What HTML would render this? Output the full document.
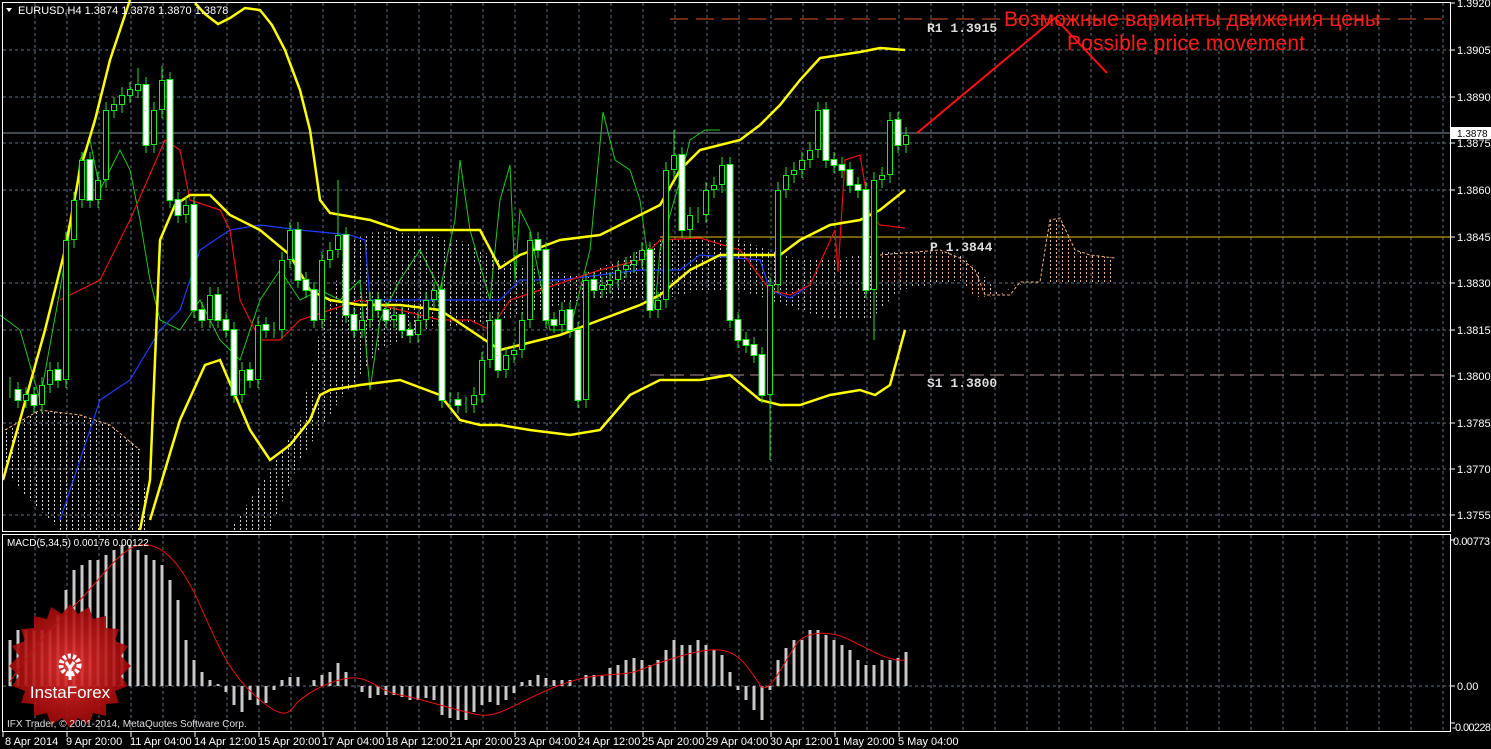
<!DOCTYPE html>
<html><head><meta charset="utf-8"><style>
html,body{margin:0;padding:0;background:#000;width:1491px;height:749px;overflow:hidden}
svg{display:block}
text{font-family:"Liberation Sans",sans-serif}
.ax{fill:#fff;font-size:11px}
.m{font-family:"Liberation Mono",monospace;fill:#ddd;font-size:13px;font-weight:bold}
</style></head><body>
<svg width="1491" height="749" viewBox="0 0 1491 749" xmlns="http://www.w3.org/2000/svg">
<defs>
<pattern id="hatch" width="6" height="4" patternUnits="userSpaceOnUse">
<rect x="0" y="0" width="1" height="2" fill="#ddd"/>
</pattern>
<pattern id="hatchO" width="6" height="4" patternUnits="userSpaceOnUse">
<rect x="0" y="0" width="1" height="2" fill="#f5b27a"/>
</pattern>
<radialGradient id="lg" cx="50%" cy="50%" r="50%">
<stop offset="0" stop-color="#e83030"/><stop offset="1" stop-color="#a00808"/>
</radialGradient>
</defs>
<rect width="1491" height="749" fill="#000"/>
<g stroke="#5f6f84" stroke-width="1" stroke-dasharray="3,3">
<path d="M35 3V531M67 3V531M99 3V531M131 3V531M163 3V531M195 3V531M227 3V531M259 3V531M291 3V531M323 3V531M355 3V531M387 3V531M419 3V531M451 3V531M483 3V531M515 3V531M547 3V531M579 3V531M611 3V531M643 3V531M675 3V531M707 3V531M739 3V531M771 3V531M803 3V531M835 3V531M867 3V531M899 3V531M931 3V531M963 3V531M995 3V531M1027 3V531M1059 3V531M1091 3V531M1123 3V531M1155 3V531M1187 3V531M1219 3V531M1251 3V531M1283 3V531M1315 3V531M1347 3V531M1379 3V531M1411 3V531M1443 3V531"/>
<path d="M35 535V731M67 535V731M99 535V731M131 535V731M163 535V731M195 535V731M227 535V731M259 535V731M291 535V731M323 535V731M355 535V731M387 535V731M419 535V731M451 535V731M483 535V731M515 535V731M547 535V731M579 535V731M611 535V731M643 535V731M675 535V731M707 535V731M739 535V731M771 535V731M803 535V731M835 535V731M867 535V731M899 535V731M931 535V731M963 535V731M995 535V731M1027 535V731M1059 535V731M1091 535V731M1123 535V731M1155 535V731M1187 535V731M1219 535V731M1251 535V731M1283 535V731M1315 535V731M1347 535V731M1379 535V731M1411 535V731M1443 535V731"/>
<path d="M3 50H1450M3 97H1450M3 143H1450M3 190H1450M3 283H1450M3 330H1450M3 423H1450M3 469H1450M3 515H1450M3 686H1450"/>
</g>
<path d="M670 19H1450" stroke="#e0502a" stroke-dasharray="18,8"/>
<path d="M660 237H1450" stroke="#e8c020"/>
<path d="M3 133H1450" stroke="#8090a0"/>
<path d="M650 375H1450" stroke="#b09098" stroke-dasharray="14,6"/>
<polygon fill="url(#hatch)" opacity="0.9" points="230,530 270,470 300,420 320,330 350,240 380,230 420,235 460,240 500,260 540,270 580,275 620,260 660,240 700,240 740,240 770,250 800,260 830,260 860,255 900,250 940,250 960,255 980,272 1000,295 1020,282 1020,282 1000,295 960,280 900,290 870,320 830,320 800,310 770,300 740,290 700,290 660,300 620,300 580,300 540,310 500,320 460,325 420,330 380,350 340,400 320,430 300,460 270,530"/>
<polygon fill="url(#hatchO)" points="880,255 940,250 960,258 975,270 990,290 1000,295 1015,285 1045,282 1050,220 1060,218 1068,235 1075,250 1090,255 1115,258 1115,282 1045,282 1020,282 1000,296 975,297 960,280 900,282 880,282"/>
<polyline fill="none" stroke="#f5b27a" stroke-dasharray="3,2" points="880,255 940,250 960,258 975,270 985,295 1010,295 1020,282 1040,282 1045,250 1050,220 1060,218 1068,235 1075,250 1090,255 1115,258"/>
<polygon fill="url(#hatch)" points="5,430 40,410 80,415 110,425 140,450 150,530 60,530 20,490 5,470"/>
<polyline fill="none" stroke="#f5b27a" stroke-dasharray="3,2" points="5,430 40,410 80,415 110,425 140,450"/>
<polyline fill="none" stroke="#1ec81e" stroke-width="1" points="0,315 20,330 40,400 60,290 70,230 80,160 90,140 100,190 120,150 130,170 140,220 150,280 160,320 180,330 200,300 220,340 240,360 260,300 280,270 300,300 320,290 340,300 360,280 370,390 380,320 400,280 420,250 440,290 455,220 460,160 470,230 490,300 500,200 510,165 515,280 520,210 530,230 550,330 570,330 590,250 603,112 615,160 630,170 640,200 655,310 660,250 680,180 690,140 705,130 720,130"/>
<polyline fill="none" stroke="#1c3cff" stroke-width="1.2" points="60,520 80,460 100,400 130,380 160,330 180,310 200,250 230,230 260,225 300,230 350,235 365,240 370,300 440,300 500,300 520,280 560,280 640,270 680,270 700,255 760,260 770,290 790,298 810,285"/>
<polyline fill="none" stroke="#e81010" stroke-width="1.2" points="60,300 100,280 130,220 165,140 180,150 190,200 220,210 230,230 240,300 260,340 280,340 300,320 330,310 360,300 400,310 440,320 470,320 490,330 510,300 540,290 570,280 600,270 640,260 660,240 700,238 740,250 770,290 790,295 810,285 835,230 838,272 845,160 860,155 870,215 880,225 905,228"/>
<g fill="none" stroke="#ffff00" stroke-width="2.5">
<polyline points="3,480 20,420 45,330 65,250 80,170 95,120 110,60 125,15 130,0"/>
<polyline points="195,3 205,14 218,24 230,18 245,8 260,10 272,25 285,50 300,90 310,130 320,200 330,213 370,220 400,230 440,230 480,230 500,268 520,255 560,240 600,235 640,215 660,205 680,170 700,150 740,140 760,125 780,105 800,80 820,58 860,52 880,48 905,50"/>
<polyline points="140,530 150,480 160,240 175,205 190,195 210,195 230,215 260,230 290,255 310,290 330,300 360,305 400,305 440,310 470,330 500,350 520,345 560,335 600,320 640,305 660,295 690,270 720,255 750,255 780,255 800,240 830,225 860,220 880,210 905,190"/>
<polyline points="150,520 180,420 205,365 220,360 235,395 250,430 270,460 290,445 310,420 320,395 330,390 360,385 400,380 440,395 460,420 480,425 500,425 530,430 570,435 600,430 630,395 660,380 700,380 730,375 760,400 780,405 800,405 830,395 860,390 875,395 890,385 905,330"/>
</g>
<path stroke="#1ee81e" stroke-width="1" fill="none" d="M10 377V398M18 382V408M26 387V408M34 387V413M42 377V413M50 362V393M58 362V388M66 232V388M74 192V248M82 152V208M90 152V208M98 172V208M106 102V188M114 97V118M122 87V113M130 82V103M138 68V98M146 77V153M154 102V153M162 66V118M170 72V208M178 192V223M186 197V223M194 197V318M202 302V328M210 287V328M218 287V328M226 312V338M234 322V403M242 362V403M250 362V388M258 317V388M266 317V338M274 322V338M282 252V338M290 222V268M298 222V288M306 272V298M314 282V328M322 252V328M330 242V268M338 180V258M346 227V323M354 307V338M362 312V338M370 292V328M378 292V318M386 302V328M394 307V328M402 307V338M410 322V343M418 312V343M426 292V328M434 282V308M442 282V408M450 392V408M458 392V413M466 397V413M474 387V413M482 352V403M490 312V368M498 312V378M506 347V378M514 342V363M522 312V358M530 232V328M538 232V258M546 242V328M554 312V333M562 302V333M570 302V338M578 322V408M586 272V408M594 272V298M602 277V298M610 272V293M618 262V288M626 257V278M634 252V273M642 242V268M650 242V318M658 292V318M666 162V308M674 130V178M682 147V238M690 207V238M698 207V223M706 182V223M714 177V198M722 157V193M730 157V328M738 312V348M746 332V353M754 337V363M762 347V403M770 277V460M778 182V293M786 167V198M794 162V183M802 152V178M810 142V168M818 102V158M826 102V168M834 152V173M842 157V178M850 162V193M858 177V198M866 182V298M874 172V340M882 167V188M890 112V183M898 112V153M906 127V153"/>
<path stroke="#1ee81e" stroke-width="6" fill="none" d="M26 401V394M42 405V385M50 385V370M66 380V240M74 240V200M82 200V160M98 200V180M106 180V110M114 111V104M122 105V95M130 96V89M138 91V84M154 145V110M162 110V80M186 215V205M210 320V295M242 395V370M258 380V325M282 330V260M290 260V230M322 320V260M330 260V250M338 250V235M362 330V320M370 320V300M394 320V315M418 335V320M426 320V300M434 300V290M474 405V395M482 395V360M490 360V320M506 370V355M514 355V350M522 350V320M530 320V240M562 325V310M586 400V280M602 290V285M610 285V280M618 280V270M626 270V265M634 265V260M642 260V250M658 310V300M666 300V170M674 170V155M690 230V215M706 215V190M714 190V185M722 185V165M770 395V285M778 285V190M786 190V175M794 175V170M802 170V160M810 160V150M818 150V110M874 290V180M882 180V175M890 175V120M906 145V135"/>
<path stroke="#000" stroke-width="4" fill="none" d="M26 400V395M42 404V386M50 384V371M66 379V241M74 239V201M82 199V161M98 199V181M106 179V111M114 110V105M122 104V96M130 95V90M138 90V85M154 144V111M162 109V81M186 214V206M210 319V296M242 394V371M258 379V326M282 329V261M290 259V231M322 319V261M330 259V251M338 249V236M362 329V321M370 319V301M394 319V316M418 334V321M426 319V301M434 299V291M474 404V396M482 394V361M490 359V321M506 369V356M514 354V351M522 349V321M530 319V241M562 324V311M586 399V281M602 289V286M610 284V281M618 279V271M626 269V266M634 264V261M642 259V251M658 309V301M666 299V171M674 169V156M690 229V216M706 214V191M714 189V186M722 184V166M770 394V286M778 284V191M786 189V176M794 174V171M802 169V161M810 159V151M818 149V111M874 289V181M882 179V176M890 174V121M906 144V136"/>
<path stroke="#1ee81e" stroke-width="7" fill="none" d="M18 389V401M34 394V406M58 369V381M90 159V201M146 84V146M170 79V201M178 199V216M194 204V311M202 309V321M218 294V321M226 319V331M234 329V396M250 369V381M266 324V331M298 229V281M306 279V291M314 289V321M346 234V316M354 314V331M378 299V311M386 309V321M402 314V331M410 329V336M442 289V401M458 399V406M498 319V371M538 239V251M546 249V321M554 319V326M570 309V331M578 329V401M594 279V291M650 249V311M682 154V231M730 164V321M738 319V341M746 339V346M754 344V356M762 354V396M826 109V161M834 159V166M842 164V171M850 169V186M858 184V191M866 189V291M898 119V146"/>
<path stroke="#fff" stroke-width="5" fill="none" d="M18 390V400M34 395V405M58 370V380M90 160V200M146 85V145M170 80V200M178 200V215M194 205V310M202 310V320M218 295V320M226 320V330M234 330V395M250 370V380M266 325V330M298 230V280M306 280V290M314 290V320M346 235V315M354 315V330M378 300V310M386 310V320M402 315V330M410 330V335M442 290V400M458 400V405M498 320V370M538 240V250M546 250V320M554 320V325M570 310V330M578 330V400M594 280V290M650 250V310M682 155V230M730 165V320M738 320V340M746 340V345M754 345V355M762 355V395M826 110V160M834 160V165M842 165V170M850 170V185M858 185V190M866 190V290M898 120V145"/>
<path d="M917 133L1055 18L1107 73" fill="none" stroke="#ff1010" stroke-width="2"/>
<text x="1004" y="26" fill="#ff1a1a" font-size="21" textLength="376">Возможные варианты движения цены</text>
<text x="1067" y="50" fill="#ff1a1a" font-size="21" textLength="238">Possible price movement</text>
<text x="927" y="32" class="m">R1 1.3915</text>
<text x="930" y="251" class="m">P 1.3844</text>
<text x="927" y="387" class="m">S1 1.3800</text>
<path stroke="#c8c8c8" stroke-width="3" fill="none" d="M10 686V640M18 686V630M26 686V630M34 686V630M42 686V630M50 686V630M58 686V615M66 686V590M74 686V570M82 686V565M90 686V560M98 686V560M106 686V555M114 686V550M122 686V545M130 686V545M138 686V550M146 686V555M154 686V560M162 686V565M170 686V580M178 686V600M186 686V640M194 686V660M202 686V672M210 686V680M218 686V684M226 686V692M234 686V705M242 686V712M250 686V700M258 686V705M266 686V703M274 686V690M282 686V680M290 686V677M298 686V677M314 686V680M322 686V675M330 686V672M338 686V663M346 686V672M362 686V692M370 686V698M378 686V695M386 686V695M394 686V695M402 686V697M410 686V700M418 686V700M426 686V698M434 686V700M442 686V715M450 686V718M458 686V720M466 686V720M474 686V712M482 686V705M490 686V702M498 686V705M506 686V700M514 686V693M522 686V682M530 686V680M538 686V675M546 686V678M554 686V680M562 686V680M570 686V680M586 686V675M594 686V675M602 686V675M610 686V668M618 686V665M626 686V660M634 686V658M642 686V660M650 686V665M658 686V660M666 686V650M674 686V640M682 686V645M690 686V645M698 686V640M706 686V645M714 686V650M722 686V655M730 686V672M738 686V690M746 686V700M754 686V710M762 686V720M770 686V690M778 686V660M786 686V648M794 686V640M802 686V640M810 686V630M818 686V630M826 686V635M834 686V640M842 686V645M850 686V650M858 686V660M866 686V665M874 686V665M882 686V660M890 686V660M898 686V658M906 686V652"/>
<path d="M10 682C30 650 60 620 80 600S120 548 140 545S180 560 200 605S230 675 260 700S290 708 300 700S330 680 350 678S380 692 400 695S460 712 480 715S520 700 560 685S620 678 640 670S700 648 720 650S750 670 760 685S790 648 800 640S830 630 850 640S890 662 905 660" fill="none" stroke="#e81010" stroke-width="1"/>
<g transform="translate(70,666)">
<polygon fill="url(#lg)" opacity="0.9" points="0,-62 8,-52 19,-59 23,-47 36,-50 36,-38 49,-37 45,-25 58,-20 51,-10 61,0 51,10 58,20 45,25 49,37 36,38 36,50 23,47 19,59 8,52 0,62 -8,52 -19,59 -23,47 -36,50 -36,38 -49,37 -45,25 -58,20 -51,10 -61,0 -51,-10 -58,-20 -45,-25 -49,-37 -36,-38 -36,-50 -23,-47 -19,-59 -8,-52"/>
<circle cx="0" cy="-1" r="9" fill="none" stroke="#fff" stroke-width="5" stroke-dasharray="3,2"/>
<path d="M-4 -4L0 2L4 -4M0 2V14" stroke="#fff" stroke-width="3" fill="none"/>
<text x="0" y="32" text-anchor="middle" fill="#fff" font-size="17">InstaForex</text>
</g>
<text x="7" y="727" fill="#ddd" font-size="10">IFX Trader, © 2001-2014, MetaQuotes Software Corp.</text>
<path d="M6 8H12L9 12Z" fill="#fff"/>
<text x="18" y="14" class="ax">EURUSD,H4  1.3874 1.3878 1.3870 1.3878</text>
<text x="7" y="546" fill="#fff" font-size="10">MACD(5,34,5) 0.00176 0.00122</text>
<rect x="2.5" y="2.5" width="1448" height="529" fill="none" stroke="#fff"/>
<rect x="2.5" y="534.5" width="1448" height="197" fill="none" stroke="#fff"/>
<g>
<text x="1457" y="7" class="ax" font-size="10">1.3920</text>
<text x="1457" y="54" class="ax" font-size="10">1.3905</text>
<text x="1457" y="101" class="ax" font-size="10">1.3890</text>
<text x="1457" y="147" class="ax" font-size="10">1.3875</text>
<text x="1457" y="194" class="ax" font-size="10">1.3860</text>
<text x="1457" y="241" class="ax" font-size="10">1.3845</text>
<text x="1457" y="287" class="ax" font-size="10">1.3830</text>
<text x="1457" y="334" class="ax" font-size="10">1.3815</text>
<text x="1457" y="380" class="ax" font-size="10">1.3800</text>
<text x="1457" y="427" class="ax" font-size="10">1.3785</text>
<text x="1457" y="473" class="ax" font-size="10">1.3770</text>
<text x="1457" y="519" class="ax" font-size="10">1.3755</text>
<text x="1453" y="545" class="ax" font-size="10" textLength="37">0.00773</text>
<text x="1457" y="690" class="ax" font-size="10">0.00</text>
<text x="1452" y="731" class="ax" font-size="10" textLength="39">-0.00228</text>
</g>
<rect x="1451" y="127" width="40" height="12" fill="#fff"/>
<text x="1457" y="137" fill="#000" font-size="10">1.3878</text>
<path stroke="#fff" d="M1451 3H1455M1451 50H1455M1451 97H1455M1451 143H1455M1451 190H1455M1451 237H1455M1451 283H1455M1451 330H1455M1451 376H1455M1451 423H1455M1451 469H1455M1451 515H1455M1451 540H1455M1451 686H1455M1451 723H1455"/>
<path stroke="#fff" d="M3 732V737M67 732V737M131 732V737M195 732V737M259 732V737M323 732V737M387 732V737M451 732V737M515 732V737M579 732V737M643 732V737M707 732V737M771 732V737M835 732V737M899 732V737"/>
<g>
<text x="5" y="745" class="ax" font-size="10">8 Apr 2014</text>
<text x="66" y="745" class="ax" font-size="10">9 Apr 20:00</text>
<text x="130" y="745" class="ax" font-size="10">11 Apr 04:00</text>
<text x="194" y="745" class="ax" font-size="10">14 Apr 12:00</text>
<text x="258" y="745" class="ax" font-size="10">15 Apr 20:00</text>
<text x="322" y="745" class="ax" font-size="10">17 Apr 04:00</text>
<text x="386" y="745" class="ax" font-size="10">18 Apr 12:00</text>
<text x="450" y="745" class="ax" font-size="10">21 Apr 20:00</text>
<text x="514" y="745" class="ax" font-size="10">23 Apr 04:00</text>
<text x="578" y="745" class="ax" font-size="10">24 Apr 12:00</text>
<text x="642" y="745" class="ax" font-size="10">25 Apr 20:00</text>
<text x="706" y="745" class="ax" font-size="10">29 Apr 04:00</text>
<text x="770" y="745" class="ax" font-size="10">30 Apr 12:00</text>
<text x="834" y="745" class="ax" font-size="10">1 May 20:00</text>
<text x="898" y="745" class="ax" font-size="10">5 May 04:00</text>
</g>
</svg>
</body></html>
